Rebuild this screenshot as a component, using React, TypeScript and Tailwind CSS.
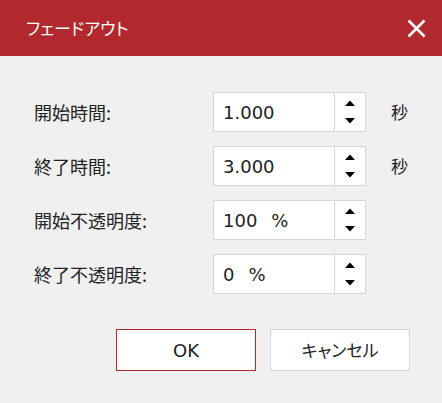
import React from "react";

const JP = "font-['Noto_Sans_CJK_JP',sans-serif]";
const NUM = "font-['DejaVu_Sans','Noto_Sans_CJK_JP',sans-serif]";

type Row = { label: string; value: string; suffix?: string; unit?: string };

const ROWS: Row[] = [
  { label: "開始時間:", value: "1.000", unit: "秒" },
  { label: "終了時間:", value: "3.000", unit: "秒" },
  { label: "開始不透明度:", value: "100", suffix: "%" },
  { label: "終了不透明度:", value: "0", suffix: "%" },
];

function Spinner() {
  return (
    <div className="flex w-[31px] flex-col items-center justify-between border-l border-[#d5d5db] py-[6px]">
      <svg width="12" height="8" viewBox="0 0 12 8">
        <path d="M6 1.5 L11 7 L1 7 Z" fill="#000" />
      </svg>
      <svg width="12" height="8" viewBox="0 0 12 8">
        <path d="M1 1 L11 1 L6 6.5 Z" fill="#000" />
      </svg>
    </div>
  );
}

export default function App() {
  return (
    <div className="h-[403px] w-[442px] bg-[#f0f0f0]">
      {/* タイトルバー */}
      <div className="flex h-[56px] items-center justify-between bg-[#b1292f] pl-[26px] pr-[16px]">
        <span className={`${JP} text-[17px] text-white [font-feature-settings:'palt']`}>フェードアウト</span>
        <svg width="19" height="19" viewBox="0 0 19 19">
          <path d="M1.5 1.5 L17.5 17.5 M17.5 1.5 L1.5 17.5" stroke="#fff" strokeWidth="2.6" />
        </svg>
      </div>

      {/* 入力行 */}
      <div className="flex flex-col gap-[14px] pt-[36px]">
        {ROWS.map((row) => (
          <div key={row.label} className="flex h-[40px] items-center">
            <span className={`${JP} w-[213px] pl-[34px] text-[18px] text-[#222]`}>{row.label}</span>
            <div className="flex h-[40px] w-[153px] border border-[#d5d5db] bg-white">
              <div className={`${NUM} flex flex-1 items-center pl-[9px] text-[18px] text-[#222]`}>
                <span>{row.value}</span>
                {row.suffix && <span className="ml-[14px]">{row.suffix}</span>}
              </div>
              <Spinner />
            </div>
            {row.unit && (
              <span className={`${JP} ml-[25px] text-[17px] text-[#222]`}>{row.unit}</span>
            )}
          </div>
        ))}
      </div>

      {/* ボタン */}
      <div className="flex justify-end gap-[14px] pr-[32px] pt-[35px]">
        <button className={`${NUM} h-[42px] w-[140px] border border-[#b1292f] bg-white text-[18px] text-[#222]`}>
          OK
        </button>
        <button
          className={`${JP} h-[42px] w-[140px] border border-[#d5d5db] bg-white text-[17px] text-[#222] [font-feature-settings:'palt']`}
        >
          キャンセル
        </button>
      </div>
    </div>
  );
}
